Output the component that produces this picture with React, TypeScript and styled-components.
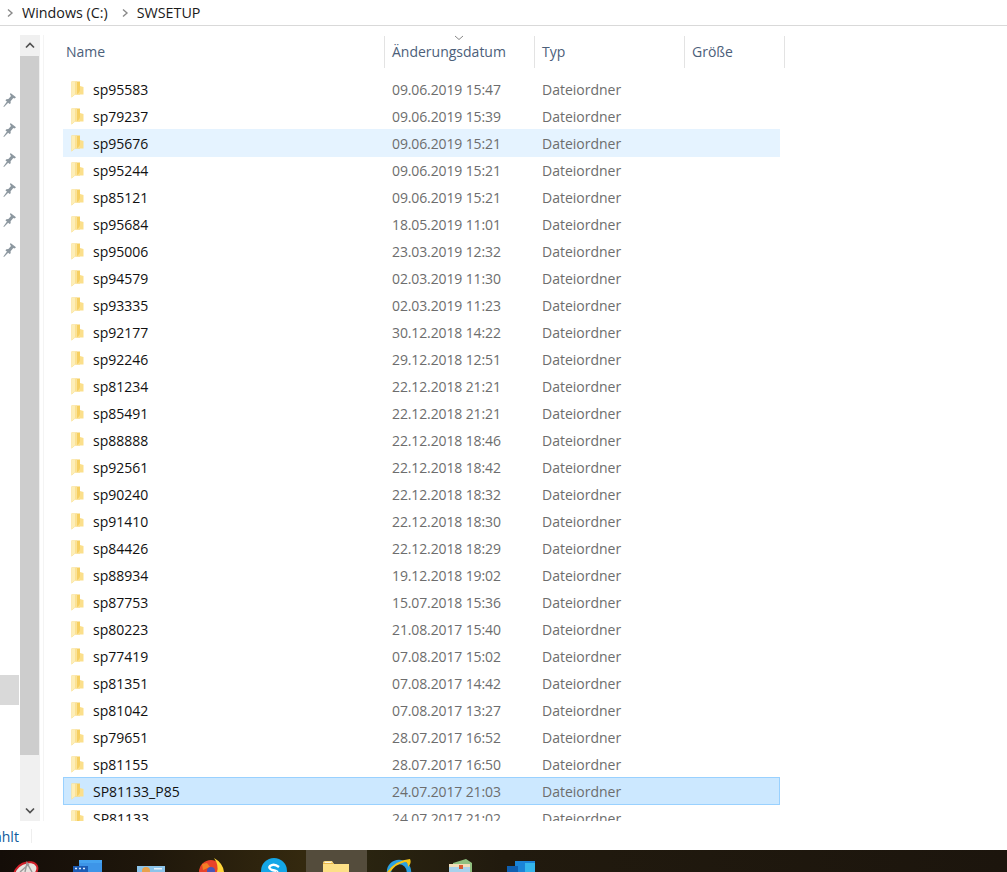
import React from "react";
import styled, { createGlobalStyle } from "styled-components";

const Global = createGlobalStyle`
  html, body { margin: 0; padding: 0; background: #fff; }
  body { font-family: "Open Sans", "Noto Sans", sans-serif; overflow: hidden; }
`;

const Page = styled.div`
  width: 1007px; height: 872px; display: flex; flex-direction: column; overflow: hidden; background: #fff;
`;
const Breadcrumb = styled.div`
  height: 25px; flex: none; display: flex; align-items: center; border-bottom: 1px solid #d9d9d9;
  font-size: 14.3px; color: #1a1a1a; padding-left: 6px;
`;
const Crumb = styled.span`margin: 0 13px 0 8px; line-height: 22px;`;
const Main = styled.div`flex: none; height: 796px; display: flex; padding-top: 9px; box-sizing: border-box;`;
const PinRail = styled.div`
  width: 20px; flex: none; display: flex; flex-direction: column; align-items: flex-start; gap: 14px; padding: 57px 0 0 1px; box-sizing: border-box; position: relative;
`;
const HoverBlock = styled.div`position: absolute; left: 0; top: 640px; width: 19px; height: 30px; background: #d9d9d9;`;
const Scrollbar = styled.div`
  width: 20px; flex: none; height: 786px; background: #f0f0f0; display: flex; flex-direction: column; justify-content: space-between;
`;
const ScrollBtn = styled.div`height: 21px; display: flex; align-items: center; justify-content: center; flex: none; color: #505050;`;
const Thumb = styled.div`flex: 1; background: #cdcdcd; width: 19px; margin-bottom: 45px;`;
const Content = styled.div`flex: 1; min-width: 0; margin-left: 3px; border-left: 1px solid #f4f4f4; height: 786px; overflow: hidden; padding-top: 1px; box-sizing: border-box;`;
const Header = styled.div`display: flex; height: 32px; margin-bottom: 7px; position: relative; align-items: stretch;`;
const HeadCell = styled.div<{ $w: number; $first?: boolean }>`
  width: ${p => p.$w}px; box-sizing: border-box; flex: none; border-right: 1px solid #e3e3e3;
  color: #4c607a; font-size: 14px; line-height: 32px; padding-left: ${p => (p.$first ? 22 : 7)}px;
`;
const SortCaret = styled.svg`position: absolute; left: 410px; top: -1px;`;
const Row = styled.div<{ $tone?: string }>`
  width: 717px; margin: 0 0 -1px 19px; height: 28px; padding-top: 1px; box-sizing: border-box; display: flex; align-items: center; flex: none;
  background: ${p => (p.$tone === "sel" ? "#cce8ff" : p.$tone === "hover" ? "#e5f3ff" : "transparent")};
  border: ${p => (p.$tone === "sel" ? "1px solid #99d1ff" : "1px solid transparent")};
`;
const FolderWrap = styled.div`width: 16px; margin-left: 7px; display: flex; flex: none;`;
const Name = styled.div`margin-left: 6px; width: 299px; flex: none; font-size: 14px; color: #111;`;
const DateCell = styled.div`width: 150px; flex: none; font-size: 14px; color: #6d6d6d; letter-spacing: -0.12px;`;
const TypeCell = styled.div`width: 150px; flex: none; font-size: 14px; color: #6d6d6d;`;
const Status = styled.div`
  height: 28px; flex: none; font-size: 14px; display: flex; align-items: center;
`;
const StatusText = styled.span`margin-left: -6px; color: #0f5a9c;`;
const StatusDivider = styled.div`width: 1px; height: 14px; background: #eee; margin-left: 12px;`;
const Taskbar = styled.div`
  flex: 1; background: linear-gradient(90deg, #140d08 0%, #1f170b 15%, #34290f 30%, #2a2410 36%, #211a0e 50%, #1c150d 100%); position: relative; overflow: hidden;
`;
const TaskIcon = styled.svg<{ $x: number }>`position: absolute; left: ${p => p.$x}px; top: 8px;`;
const ActiveTask = styled.div`position: absolute; left: 306px; top: 0; width: 61px; height: 22px; background: #544c3c;`;

const rows: [string, string, string?][] = [
  ["sp95583", "09.06.2019 15:47"],
  ["sp79237", "09.06.2019 15:39"],
  ["sp95676", "09.06.2019 15:21", "hover"],
  ["sp95244", "09.06.2019 15:21"],
  ["sp85121", "09.06.2019 15:21"],
  ["sp95684", "18.05.2019 11:01"],
  ["sp95006", "23.03.2019 12:32"],
  ["sp94579", "02.03.2019 11:30"],
  ["sp93335", "02.03.2019 11:23"],
  ["sp92177", "30.12.2018 14:22"],
  ["sp92246", "29.12.2018 12:51"],
  ["sp81234", "22.12.2018 21:21"],
  ["sp85491", "22.12.2018 21:21"],
  ["sp88888", "22.12.2018 18:46"],
  ["sp92561", "22.12.2018 18:42"],
  ["sp90240", "22.12.2018 18:32"],
  ["sp91410", "22.12.2018 18:30"],
  ["sp84426", "22.12.2018 18:29"],
  ["sp88934", "19.12.2018 19:02"],
  ["sp87753", "15.07.2018 15:36"],
  ["sp80223", "21.08.2017 15:40"],
  ["sp77419", "07.08.2017 15:02"],
  ["sp81351", "07.08.2017 14:42"],
  ["sp81042", "07.08.2017 13:27"],
  ["sp79651", "28.07.2017 16:52"],
  ["sp81155", "28.07.2017 16:50"],
  ["SP81133_P85", "24.07.2017 21:03", "sel"],
  ["SP81133", "24.07.2017 21:02"],
];

const Chevron = () => (
  <svg width="8" height="10" viewBox="0 0 8 10"><path d="M2 1.5 L6 5 L2 8.5" fill="none" stroke="#8a8a8a" strokeWidth="1.4" /></svg>
);
const Pin = () => (
  <svg width="16" height="16" viewBox="0 0 16 16">
    <path d="M9.5 1 L15 5.2 L13.6 6.4 L12.3 5.9 L9.6 9.2 L9.7 11.2 L8.6 12 L4.4 8.2 L5.4 7.2 L7.4 7 L10 4 L9 2.4 Z" fill="#8c979f" />
    <path d="M6 9.4 L7.4 10.6 L3 15 L2.4 14.4 Z" fill="#8c979f" />
  </svg>
);
const Folder = () => (
  <svg width="13" height="17" viewBox="0 0 13 17" style={{ display: "block" }}>
    <path d="M0.5 0.5 H9 V13.5 H4 L0.5 16.5 Z" fill="#f6cf62" />
    <path d="M9 5 L12.5 6 V13.5 H5 Q8.5 12 9 9 Z" fill="#fbdf8b" />
    <path d="M0.5 0.5 H4.5 V13 L0.5 16.5 Z" fill="#fdeeb8" />
    <path d="M4.5 0.5 H6 V13 H4.5 Z" fill="#fbe39a" />
  </svg>
);
const Up = () => <svg width="10" height="7" viewBox="0 0 10 7"><path d="M1 5.5 L5 1.5 L9 5.5" fill="none" stroke="#505050" strokeWidth="1.7" /></svg>;
const Down = () => <svg width="10" height="7" viewBox="0 0 10 7"><path d="M1 1.5 L5 5.5 L9 1.5" fill="none" stroke="#505050" strokeWidth="1.7" /></svg>;

const TaskIcons = () => (
  <>
    <TaskIcon $x={12} width="28" height="14" viewBox="0 0 28 14">
      <ellipse cx="14" cy="13" rx="12" ry="8" transform="rotate(-25 14 13)" fill="#e8e4e0" stroke="#d0202a" strokeWidth="2" />
      <path d="M8 14 L17 6 M13 14 L15 5 L20 14" stroke="#9a9a9a" strokeWidth="1.4" fill="none" />
    </TaskIcon>
    <TaskIcon $x={72} width="32" height="14" viewBox="0 0 32 14">
      <rect x="7" y="2" width="23" height="12" fill="#3d95e8" />
      <rect x="7" y="2" width="23" height="3" fill="#45a3f0" />
      <rect x="1" y="8" width="15" height="6" fill="#1c5cb5" />
      <path d="M3 10.5 h2 M7 10.5 h2 M11 10.5 h2" stroke="#d8e8fb" strokeWidth="1.6" />
    </TaskIcon>
    <TaskIcon $x={136} width="30" height="14" viewBox="0 0 30 14">
      <rect x="1" y="8" width="28" height="6" fill="#8cc4ea" />
      <circle cx="10" cy="13" r="4" fill="#e8a24c" />
      <rect x="18" y="10" width="8" height="1.5" fill="#e6f2fb" />
    </TaskIcon>
    <TaskIcon $x={198} width="28" height="14" viewBox="0 0 28 14">
      <circle cx="13" cy="14" r="12" fill="#e8432a" />
      <path d="M4 6 L9 5 L12 9 L5 12 Z" fill="#f57f25" />
      <path d="M16 0 Q25 5 26 14 H19 Q21 7 16 0 Z" fill="#ffd53a" />
      <circle cx="13" cy="13" r="4" fill="#4a55b8" />
    </TaskIcon>
    <TaskIcon $x={259} width="30" height="14" viewBox="0 0 30 14">
      <circle cx="15" cy="13" r="13" fill="#14a7e8" />
      <path d="M20 9 Q15 5 11 8 Q9 10 13 12 Q19 13 18 14" fill="none" stroke="#fff" strokeWidth="2.4" />
    </TaskIcon>
    <TaskIcon $x={321} width="30" height="14" viewBox="0 0 30 14">
      <path d="M2 5 Q2 3 4 3 H11 L13 6 H28 V14 H2 Z" fill="#fde087" />
      <rect x="4" y="4" width="6" height="2" fill="#f7f3e3" />
      <path d="M2 5 H12 L13 6 H2 Z" fill="#e8b64a" />
    </TaskIcon>
    <TaskIcon $x={384} width="30" height="14" viewBox="0 0 30 14">
      <circle cx="15" cy="14" r="10" fill="none" stroke="#2aa1e0" strokeWidth="4.5" />
      <path d="M3 14 Q12 2 26 1 Q28 5 24 9 Q24 4 21 4 Q12 6 6 14 Z" fill="#f5c518" />
    </TaskIcon>
    <TaskIcon $x={447} width="28" height="14" viewBox="0 0 28 14">
      <path d="M6 5 L19 1 L25 5 V14 H6 Z" fill="#90c080" />
      <rect x="2" y="6" width="21" height="8" fill="#f2ddb8" />
      <rect x="2" y="9" width="21" height="5" fill="#a8d2ec" />
      <rect x="12" y="7" width="4" height="4" fill="#d85a30" />
    </TaskIcon>
    <TaskIcon $x={506} width="30" height="14" viewBox="0 0 30 14">
      <rect x="9" y="3" width="20" height="11" fill="#1a84d8" />
      <rect x="19" y="5" width="10" height="9" fill="#34b6ec" />
      <rect x="1" y="8" width="11" height="6" fill="#0f5fb0" />
    </TaskIcon>
  </>
);

export default function App() {
  return (
    <Page>
      <Global />
      <Breadcrumb>
        <Chevron />
        <Crumb>Windows (C:)</Crumb>
        <Chevron />
        <Crumb>SWSETUP</Crumb>
      </Breadcrumb>
      <Main>
        <PinRail>
          {[0, 1, 2, 3, 4, 5].map(i => <Pin key={i} />)}
          <HoverBlock />
        </PinRail>
        <Scrollbar>
          <ScrollBtn><Up /></ScrollBtn>
          <Thumb />
          <ScrollBtn><Down /></ScrollBtn>
        </Scrollbar>
        <Content>
          <Header>
            <HeadCell $w={341} $first>Name</HeadCell>
            <HeadCell $w={150}>Änderungsdatum</HeadCell>
            <HeadCell $w={150}>Typ</HeadCell>
            <HeadCell $w={100}>Größe</HeadCell>
            <SortCaret width="10" height="6" viewBox="0 0 10 6"><path d="M1 1 L5 4.5 L9 1" fill="none" stroke="#888" /></SortCaret>
          </Header>
          {rows.map(([n, d, t]) => (
            <Row key={n} $tone={t}>
              <FolderWrap><Folder /></FolderWrap>
              <Name>{n}</Name>
              <DateCell>{d}</DateCell>
              <TypeCell>Dateiordner</TypeCell>
            </Row>
          ))}
        </Content>
      </Main>
      <Status><StatusText>ählt</StatusText><StatusDivider /></Status>
      <Taskbar>
        <ActiveTask />
        <TaskIcons />
      </Taskbar>
    </Page>
  );
}
